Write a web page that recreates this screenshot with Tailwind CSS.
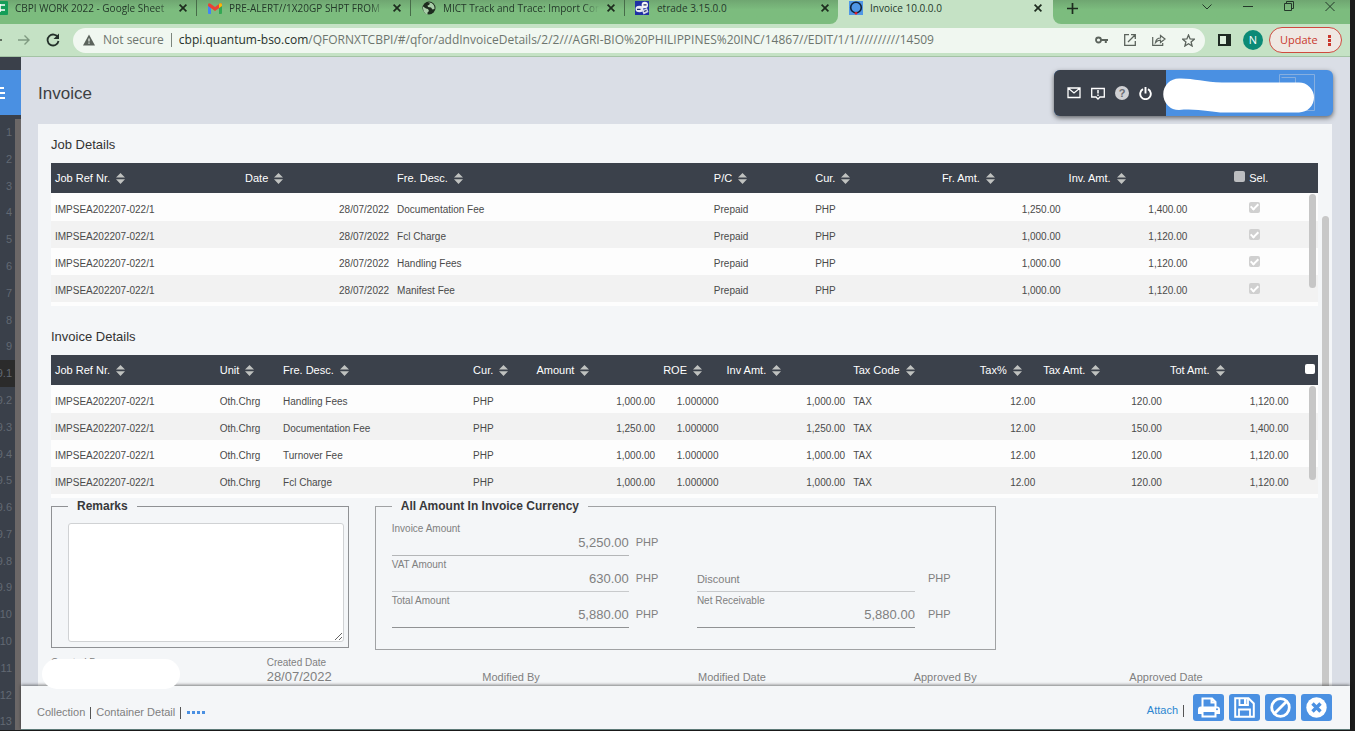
<!DOCTYPE html>
<html lang="en">
<head>
<meta charset="utf-8">
<title>Invoice 10.0.0.0</title>
<script src="https://cdn.jsdelivr.net/npm/@tailwindcss/browser@4"></script>
</head>
<body class="h-screen overflow-hidden bg-[#1c1c1c] pr-[5px] pb-px font-['Liberation_Sans',sans-serif]">
<svg class="hidden" aria-hidden="true">
  <symbol id="sort" viewBox="0 0 9 11"><path d="M0 4.6 4.5 0 9 4.6zM0 6.2 4.5 11 9 6.2z" fill="#c0c2c0"/></symbol>
  <symbol id="close" viewBox="0 0 10 10"><path d="M1.6 1.6l6.8 6.8M8.4 1.6L1.6 8.4" stroke="#1d2b1e" stroke-width="1.7" fill="none"/></symbol>
</svg>
<div class="flex h-full flex-col">

  <!-- Browser chrome -->
  <header class="shrink-0 border-b border-[#a4c3a5] bg-[#c5e2c5] font-['Open_Sans',sans-serif]">
    <div class="flex h-6 text-[10px] leading-4 text-[#24382a]">
      <div class="flex rounded-br-lg bg-linear-to-b from-[#6fa671] to-[#7cbc7e] to-40%">
        <div class="flex h-4 w-[197px] items-center overflow-hidden border-r border-[#476b49]">
          <svg class="h-4 w-2 shrink-0" viewBox="0 0 8 16"><path d="M0 1h7a1 1 0 0 1 1 1v12a1 1 0 0 1-1 1H0z" fill="#159d58"/><path d="M0 5h5M0 10h5M0 4v8" stroke="#fff" stroke-width="1.6"/></svg>
          <span class="ml-[7px] w-[158px] whitespace-nowrap mask-r-from-90%">CBPI WORK 2022 - Google Sheet</span>
          <button aria-label="Close tab" class="ml-[5px] size-[10px]"><svg class="size-full"><use href="#close"/></svg></button>
        </div>
        <div class="flex h-4 w-[214px] items-center overflow-hidden border-r border-[#476b49] pl-[11px]">
          <svg class="h-[11px] w-[14px] shrink-0" viewBox="0 0 14 11"><path d="M0 2v8a1 1 0 0 0 1 1h2V4z" fill="#4285f4"/><path d="M14 2v8a1 1 0 0 1-1 1h-2V4z" fill="#34a853"/><path d="M0 1.500Q.6-.4 2.500.7L7 4l4.500-3.300Q13.400-.4 14 1.500V3L7 8 0 3z" fill="#ea4335"/><path d="M11 1l.6-.4Q13.400-.4 14 1.500V3l-3 2z" fill="#fbbc04"/></svg>
          <span class="ml-[7px] w-[156px] whitespace-nowrap mask-r-from-90%">PRE-ALERT//1X20GP SHPT FROM</span>
          <button aria-label="Close tab" class="ml-[7px] size-[10px]"><svg class="size-full"><use href="#close"/></svg></button>
        </div>
        <div class="flex h-4 w-[214px] items-center overflow-hidden border-r border-[#476b49] pl-[11px]">
          <svg class="size-[14px] shrink-0" viewBox="0 0 14 14"><circle cx="7" cy="7" r="6.500" fill="#1d2b1e"/><path d="M1 5.500l3 2 2 .5 1 2-1.500 1.500 0 1.800C2 12.500.8 9 1 5.500zM6 1.500l2 1-1 1.500-1.500.5L6 6l3 .5 1.500 2 2-.5C13 4 10 .7 6 1.500z" fill="#a9cfa9"/></svg>
          <span class="ml-[7px] w-[156px] whitespace-nowrap mask-r-from-90%">MICT Track and Trace: Import Cor</span>
          <button aria-label="Close tab" class="ml-[7px] size-[10px]"><svg class="size-full"><use href="#close"/></svg></button>
        </div>
        <div class="flex h-4 w-[213px] items-center overflow-hidden pl-[10px]">
          <svg class="size-[14px] shrink-0" viewBox="0 0 14 14"><path d="M0 0h14v14H0z" fill="#1f2fa5"/><ellipse cx="4.500" cy="8" rx="4" ry="3.200" fill="#e7e9f3"/><circle cx="9.800" cy="4" r="3.200" fill="#f5f5f5"/><path d="M7 9.500l5-2.500 1.500 4-5 2.500z" fill="#d5d8ea"/><path d="M2 8.300h3.500M8.500 3.800h3M9 10.500l2.500-1" stroke="#1b2a66" stroke-width="1.300"/></svg>
          <span class="ml-2 w-[156px] whitespace-nowrap">etrade 3.15.0.0</span>
          <button aria-label="Close tab" class="ml-[7px] size-[10px]"><svg class="size-full"><use href="#close"/></svg></button>
        </div>
      </div>
      <div class="flex h-4 w-[215px] items-center pl-[11px]">
        <svg class="size-[14px] shrink-0" viewBox="0 0 14 14"><path d="M0 0h14v14H0z" fill="#4f97e6"/><circle cx="7" cy="6.500" r="5.300" fill="none" stroke="#10243c" stroke-width="1.600"/><path d="M7 10.500l1.800 1.800L7 14l-1.800-1.700z" fill="#e0202a"/></svg>
        <span class="ml-[7px] w-[156px]">Invoice 10.0.0.0</span>
        <button aria-label="Close tab" class="ml-[7px] size-[10px]"><svg class="size-full"><use href="#close"/></svg></button>
      </div>
      <div class="flex grow items-start rounded-bl-lg bg-linear-to-b from-[#6fa671] to-[#7cbc7e] to-40% pr-[15px] pl-[14px]">
        <button aria-label="New tab" class="mt-[3px] mr-auto size-[11px]"><svg viewBox="0 0 11 11"><path d="M5.500 0v11M0 5.500h11" stroke="#1d2b1e" stroke-width="1.700"/></svg></button>
        <div class="flex gap-[31px] pt-px">
          <button aria-label="Search tabs" class="size-[10px]"><svg viewBox="0 0 10 10"><path d="M.5 3.500L5 8l4.500-4.500" fill="none" stroke="#24382a"/></svg></button>
          <button aria-label="Minimise" class="size-[10px]"><svg viewBox="0 0 10 10"><path d="M0 5.500h10" stroke="#24382a"/></svg></button>
          <button aria-label="Restore" class="size-[10px]"><svg viewBox="0 0 10 10"><path d="M.5 2.500h7v7h-7zM2.500 2.500v-2h7v7h-2" fill="none" stroke="#24382a"/></svg></button>
          <button aria-label="Close window" class="size-[10px]"><svg viewBox="0 0 10 10"><path d="M.5 1l9 9M9.500 1l-9 9" stroke="#24382a"/></svg></button>
        </div>
      </div>
    </div>
    <div class="flex h-8 items-center pr-2">
      <button aria-label="Back" class="h-3 w-[2px] overflow-hidden"><svg class="h-3 w-[2px]" viewBox="0 0 2 12"><path d="M0 6h2" stroke="#3c473d" stroke-width="1.500"/></svg></button>
      <button aria-label="Forward" class="ml-4 size-3"><svg viewBox="0 0 12 12"><path d="M0 6h11M6.500 1.500L11 6l-4.500 4.500" fill="none" stroke="#7f9a81" stroke-width="1.400"/></svg></button>
      <button aria-label="Reload" class="ml-4 size-[14px]"><svg viewBox="0 0 14 14"><path d="M12 4.500A5.500 5.500 0 1 0 12.500 8" fill="none" stroke="#23302a" stroke-width="1.800"/><path d="M13 .5V6H7.500z" fill="#23302a"/></svg></button>
      <div class="ml-[13px] flex h-[25px] grow items-center rounded-full bg-[#f0f7f0] px-[10px] text-[12px] text-[#6d756e]">
        <svg class="size-3 shrink-0" viewBox="0 0 12 12"><path d="M6 .5L12 11.500H0z" fill="#5b635c"/><path d="M6 4.500v3M6 8.500v1.300" stroke="#f0f7f0" stroke-width="1.200"/></svg>
        <span class="ml-2">Not secure</span>
        <span class="mx-[7px] h-[14px] w-px bg-[#7c857d]"></span>
        <div class="min-w-0 grow whitespace-nowrap" role="textbox" aria-label="Address" contenteditable="true" spellcheck="false"><span class="text-[#26302a]">cbpi.quantum-bso.com</span>/QFORNXTCBPI/#/qfor/addInvoiceDetails/2/2///AGRI-BIO%20PHILIPPINES%20INC/14867//EDIT/1/1//////////14509</div>
        <div class="flex shrink-0 items-center gap-4 text-[#5b635c]">
          <svg class="h-3 w-[13px]" viewBox="0 0 13 12"><circle cx="3.500" cy="6" r="2.500" fill="none" stroke="currentColor" stroke-width="1.800"/><path d="M6 6h7M10.800 6v3" stroke="currentColor" stroke-width="2"/></svg>
          <svg class="h-3 w-3" viewBox="0 0 12 12"><path d="M5 .7H.7v10.600h10.600V7M7 .7h4.300V5M11 1L4 8" fill="none" stroke="currentColor" stroke-width="1.300"/></svg>
          <svg class="h-3 w-[14px]" viewBox="0 0 14 12"><path d="M.7 3v8.300h10V9M3.500 8.500c.5-3 2-4.500 5-4.500V1.500L13 5 8.500 8.500V6.200c-2 0-3.500.6-5 2.300z" fill="none" stroke="currentColor" stroke-width="1.200"/></svg>
          <svg class="size-[13px]" viewBox="0 0 13 13"><path d="M6.500 1l1.600 3.900 4.200.3-3.200 2.700 1 4.100-3.600-2.200L2.900 12l1-4.100L.7 5.200l4.200-.3z" fill="none" stroke="currentColor" stroke-width="1.300"/></svg>
        </div>
      </div>
      <button aria-label="Side panel" class="ml-[13px] h-3 w-[13px]"><svg viewBox="0 0 13 12"><path d="M1 1h11v10H1z" fill="#dcefdc" stroke="#1e2a22" stroke-width="2"/><path d="M8 0h5v12H8z" fill="#1e2a22"/></svg></button>
      <button aria-label="Profile" class="ml-3 size-5 rounded-full bg-[#0b8a76] text-[11px] leading-5 text-white">N</button>
      <button class="ml-[6px] flex h-[26px] w-[73px] items-center justify-between rounded-full border border-[#cf4a3f] bg-[#efe8e3] px-[10px] text-[11px] text-[#c9372c]">Update
        <svg class="h-[11px] w-[3px]" viewBox="0 0 3 11"><path d="M0 0h3v3H0zM0 4h3v3H0zM0 8h3v3H0z" fill="#c9372c"/></svg></button>
    </div>
  </header>

  <div class="flex min-h-0 grow">
    <!-- Collapsed grid showing behind the page -->
    <aside class="flex w-[21px] shrink-0 flex-col overflow-hidden bg-[#3a404a] pt-[13px]">
      <button aria-label="Menu" class="flex h-[45px] shrink-0 items-center bg-[#4a90e2]"><svg class="h-3 w-[5px]" viewBox="0 0 5 12"><path d="M0 1h4M0 6h5M0 11h5" stroke="#fff" stroke-width="2"/></svg></button>
      <div class="-mb-[5px] flex min-h-0 grow border-t-4 border-[#3a404a]">
        <ol id="lines" class="flex w-[15px] flex-col text-right text-[11px] text-[#626973]"></ol>
        <div class="grow bg-[#6b6767]"></div>
      </div>
    </aside>

    <div class="relative flex min-w-0 grow flex-col bg-[#dadee6]">
      <div class="flex h-[67px] shrink-0 items-start justify-between px-[17px] pt-[13px]">
        <h1 class="pt-3 text-[17px] leading-6 text-[#3d3f43]">Invoice</h1>
        <div class="relative flex h-[46px] w-[279px] rounded-md bg-[#4a90e2] shadow-[0_2px_5px_#0000008c]">
          <div class="flex w-28 items-center gap-[10px] rounded-l-md bg-[#3b414b] pl-[13px] text-white">
            <button aria-label="Mail" class="h-3 w-[14px]"><svg viewBox="0 0 14 12"><path d="M1 1h12v9.500H1zM1 1l6 5 6-5" fill="none" stroke="#fff" stroke-width="1.300"/></svg></button>
            <button aria-label="Notices" class="h-[13px] w-[14px]"><svg viewBox="0 0 14 13"><path d="M.7 1.500h12.600v8.500H9L7 12l-2-2H.7z" fill="none" stroke="#fff" stroke-width="1.300"/><path d="M7 3v3.500M7 7.500V9" stroke="#fff" stroke-width="1.500"/></svg></button>
            <button aria-label="Help" class="size-[14px] rounded-full bg-[#d0d1d4] text-[11px] leading-[14px] font-bold text-[#6a6d73]">?</button>
            <button aria-label="Log out" class="size-[13px]"><svg viewBox="0 0 13 13"><path d="M4 2.200A5.300 5.300 0 1 0 9 2.200M6.500 0v6.500" fill="none" stroke="#fff" stroke-width="1.900"/></svg></button>
          </div>
          <svg class="absolute top-1 right-[18px] h-[39px] w-[154px]" viewBox="0 0 154 39"><path d="M118.500.5h35v36h-35zM120.500 3.500h14v8" fill="none" stroke="#86afe0"/><path d="M18 4.500C31 4 43 8 61 8.500H138a15 15 0 0 1 0 30H63C51 38.500 36 34 18 36A15.500 15.500 0 0 1 18 4.500z" fill="#fff"/></svg>
        </div>
      </div>

      <main class="relative mr-[18px] ml-[17px] flex min-h-0 grow flex-col overflow-hidden bg-[#f4f6f8] pr-[14px] pl-[13px]">
        <h2 class="pt-[11px] text-[13px] leading-5 text-[#333]">Job Details</h2>
        <div class="relative mt-2 border-b-4 border-[#fdfdfd]">
          <table id="jobs" class="w-full table-fixed text-[10px] text-[#4a4a4a]"></table>
          <div class="absolute top-[31px] right-[2px] h-[94px] w-[7px] rounded-full bg-[#c6c6c6]"></div>
        </div>
        <h2 class="pt-[21px] text-[13px] leading-5 text-[#333]">Invoice Details</h2>
        <div class="relative mt-2 border-b-4 border-[#fdfdfd]">
          <table id="items" class="w-full table-fixed text-[10px] text-[#4a4a4a]"></table>
          <div class="absolute top-[31px] right-[2px] h-[94px] w-[7px] rounded-full bg-[#c6c6c6]"></div>
        </div>

        <div class="flex items-start gap-[26px] text-[#808080]">
          <fieldset class="w-[23.5%] border border-[#8f9194] pr-1 pl-4">
            <legend class="px-[9px] text-[12px] leading-4 font-bold text-[#38393b]"><label for="remarks">Remarks</label></legend>
            <textarea id="remarks" class="mt-[9px] mb-[5px] block h-[119px] w-full rounded-[3px] border border-[#d0d2d4] bg-white outline-none"></textarea>
          </fieldset>
          <fieldset class="w-[49%] border border-[#a0a2a4] px-4">
            <legend class="px-[9px] text-[12px] leading-4 font-bold text-[#38393b]">All Amount In Invoice Currency</legend>
            <div class="mt-[6px] mb-[21px] flex">
              <div class="w-[52%]">
                <div class="flex h-9"><div class="flex w-[237px] flex-col border-b border-[#b4b6b8] pt-[3px]"><label for="inv" class="text-[10px] leading-3">Invoice Amount</label><input id="inv" class="h-4 w-full text-right text-[13px] outline-none" value="5,250.00"></div><span class="pt-[14px] pl-[7px] text-[11px] leading-4">PHP</span></div>
                <div class="flex h-9"><div class="flex w-[237px] flex-col border-b border-[#c8cacc] pt-[3px]"><label for="vat" class="text-[10px] leading-3">VAT Amount</label><input id="vat" class="h-4 w-full text-right text-[13px] outline-none" value="630.00"></div><span class="pt-[14px] pl-[7px] text-[11px] leading-4">PHP</span></div>
                <div class="flex h-9"><div class="flex w-[237px] flex-col border-b border-[#909294] pt-[3px]"><label for="tot" class="text-[10px] leading-3">Total Amount</label><input id="tot" class="h-4 w-full text-right text-[13px] outline-none" value="5,880.00"></div><span class="pt-[14px] pl-[7px] text-[11px] leading-4">PHP</span></div>
              </div>
              <div class="grow pt-9">
                <div class="flex h-9"><div class="flex w-[218px] items-center border-b border-[#c8cacc] pt-[10px]"><label for="dis" class="text-[11px] leading-4">Discount</label><input id="dis" class="h-4 min-w-0 grow outline-none"></div><span class="pt-[14px] pl-[13px] text-[11px] leading-4">PHP</span></div>
                <div class="flex h-9"><div class="flex w-[218px] flex-col border-b border-[#909294] pt-[3px]"><label for="net" class="text-[10px] leading-3">Net Receivable</label><input id="net" class="h-4 w-full text-right text-[13px] outline-none" value="5,880.00"></div><span class="pt-[14px] pl-[13px] text-[11px] leading-4">PHP</span></div>
              </div>
            </div>
          </fieldset>
        </div>

        <div class="mt-[7px] -mr-[27px] grid grid-cols-6 items-end text-[11px] leading-4 text-[#808080]">
          <p class="h-7 text-[10px] leading-3">Created By</p>
          <p class="flex flex-col"><span class="text-[10px] leading-3">Created Date</span><span class="text-[13px]">28/07/2022</span></p>
          <p>Modified By</p><p>Modified Date</p><p>Approved By</p><p>Approved Date</p>
        </div>
        <div class="absolute top-[92px] right-[3px] bottom-0 w-[7px] rounded-t-full bg-[#c8c8c8]"></div>
      </main>

      <footer class="relative flex h-[44px] shrink-0 items-center justify-between border-b border-[#5d7a78] bg-[#f4f6f8] pr-[18px] pl-4 text-[11px] text-[#808080] shadow-[0_-1px_3px_#00000080]">
        <nav class="flex items-center gap-[5px] pt-[10px]">
          <a href="#">Collection</a><span class="h-3 w-px bg-[#555]"></span><a href="#">Container Detail</a><span class="h-3 w-px bg-[#555]"></span>
          <a href="#" aria-label="More" class="ml-px"><svg class="h-[3px] w-[18px]" viewBox="0 0 18 3"><path d="M0 0h3v3H0zM5 0h3v3H5zM10 0h3v3h-3zM15 0h3v3h-3z" fill="#4a90e2"/></svg></a>
        </nav>
        <div class="flex items-center gap-[5px]">
          <a href="#" class="pt-[6px] text-[#2b86d0]">Attach</a><span class="mt-[6px] mr-1 h-3 w-px bg-[#555]"></span>
          <button aria-label="Print" class="flex h-[27px] w-[31px] items-center justify-center rounded-[3px] bg-[#4a90e2]"><svg class="h-[21px] w-[22px]" viewBox="0 0 22 21"><path d="M4.500 10V1.500h9.500l3.500 3.500v5M13.500 1.500V5.500h4" fill="none" stroke="#fff" stroke-width="2"/><path d="M3 9.500h16a3 3 0 0 1 3 3V17H0v-4.500a3 3 0 0 1 3-3z" fill="#fff"/><path d="M4.500 14h13v5.500h-13z" fill="#4a90e2" stroke="#fff" stroke-width="2"/><circle cx="19" cy="12.300" r="1" fill="#4a90e2"/></svg></button>
          <button aria-label="Save" class="flex h-[27px] w-[31px] items-center justify-center rounded-[3px] bg-[#4a90e2]"><svg class="size-[21px]" viewBox="0 0 21 21"><path d="M1.200 1.200h13.300l5.300 5.300v13.300H1.200z" fill="none" stroke="#fff" stroke-width="2"/><path d="M5.500 1.500v6.500h8.500V1.500M5 19.500v-7h11v7" fill="none" stroke="#fff" stroke-width="1.800"/><path d="M10 2h2.500v5H10z" fill="#fff"/></svg></button>
          <button aria-label="Cancel" class="flex h-[27px] w-[31px] items-center justify-center rounded-[3px] bg-[#4a90e2]"><svg class="size-[21px]" viewBox="0 0 21 21"><circle cx="10.500" cy="10.500" r="8.800" fill="none" stroke="#fff" stroke-width="2.800"/><path d="M4.500 16.500l12-12" stroke="#fff" stroke-width="2.800"/></svg></button>
          <button aria-label="Close" class="flex h-[27px] w-[31px] items-center justify-center rounded-[3px] bg-[#4a90e2]"><svg class="size-[21px]" viewBox="0 0 21 21"><circle cx="10.500" cy="10.500" r="10.200" fill="#fff"/><path d="M6.500 6.500l8 8M14.500 6.500l-8 8" stroke="#4a90e2" stroke-width="3.400"/></svg></button>
        </div>
      </footer>
      <div class="absolute bottom-[41px] left-[21px] h-[30px] w-[138px] rounded-full bg-white"></div>
    </div>
  </div>
</div>

<script>
const sort = '<svg class="h-[11px] w-[9px] shrink-0" aria-hidden="true"><use href="#sort"/></svg>';

function fill(id, cols, rows, lastHead, lastCell) {
  const widths = cols.map(c => `<col style="width:${c[1]}%">`).join('');
  const heads = cols.map((c, i) => i === cols.length - 1 ? lastHead :
    `<th class="px-1 font-normal"><button class="flex items-center gap-[6px] whitespace-nowrap">${c[0]} ${sort}</button></th>`).join('');
  const body = rows.map(r => '<tr class="h-[27px] odd:bg-[#fdfdfd] even:bg-[#f2f2f2] first:h-7">' +
    r.map((v, i) => `<td class="px-1 pt-1 pb-0 ${cols[i][2] ? 'text-right' : 'text-left'} whitespace-nowrap">${v}</td>`).join('') +
    lastCell + '</tr>').join('');
  document.getElementById(id).innerHTML =
    `<colgroup>${widths}</colgroup><thead class="bg-[#3b414b] text-left text-[11px] text-white"><tr class="h-[30px]">${heads}</tr></thead><tbody>${body}</tbody>`;
}

const ref = 'IMPSEA202207-022/1', day = '28/07/2022';
fill('jobs',
  [['Job Ref Nr.', 15], ['Date', 12, 1], ['Fre. Desc.', 25], ['P/C', 8], ['Cur.', 10], ['Fr. Amt.', 10, 1], ['Inv. Amt.', 10, 1], ['Sel.', 10]],
  [['Documentation Fee', '1,250.00', '1,400.00'], ['Fcl Charge', '1,000.00', '1,120.00'], ['Handling Fees', '1,000.00', '1,120.00'], ['Manifest Fee', '1,000.00', '1,120.00']]
    .map(r => [ref, day, r[0], 'Prepaid', 'PHP', r[1], r[2]]),
  '<th class="pl-[43px] font-normal"><label class="flex items-center gap-1"><input type="checkbox" class="mb-[3px] size-[11px] appearance-none rounded-xs bg-[#bcbdc0]">Sel.</label></th>',
  '<td class="pl-[58px]"><input type="checkbox" checked disabled aria-label="Selected" class="flex size-[11px] appearance-none items-center justify-center rounded-xs bg-[#d0d0d0] after:mb-[2px] after:h-[8px] after:w-[5px] after:rotate-45 after:border-r-2 after:border-b-2 after:border-white"></td>');

fill('items',
  [['Job Ref Nr.', 13], ['Unit', 5], ['Fre. Desc.', 15], ['Cur.', 5], ['Amount', 10, 1], ['ROE', 5, 1], ['Inv Amt.', 10, 1], ['Tax Code', 10], ['Tax%', 5, 1], ['Tax Amt.', 10, 1], ['Tot Amt.', 10, 1], ['', 2]],
  [['Handling Fees', '1,000.00', '120.00', '1,120.00'], ['Documentation Fee', '1,250.00', '150.00', '1,400.00'], ['Turnover Fee', '1,000.00', '120.00', '1,120.00'], ['Fcl Charge', '1,000.00', '120.00', '1,120.00']]
    .map(r => [ref, 'Oth.Chrg', r[0], 'PHP', r[1], '1.000000', r[1], 'TAX', '12.00', r[2], r[3]]),
  '<th class="pr-[3px]"><input type="checkbox" aria-label="Select all" class="mb-[3px] ml-auto block size-[10px] appearance-none rounded-xs bg-white"></th>',
  '<td></td>');

document.getElementById('lines').innerHTML =
  ['1','2','3','4','5','6','7','8','9','9.1','9.2','9.3','9.4','9.5','9.6','9.7','9.8','9.9','10','10','11','12','13']
    .map(n => `<li class="flex min-h-0 flex-1 items-center justify-end pr-[3px] ${n === '9.1' ? 'bg-[#2b2b2b]' : ''}">${n}</li>`).join('');
</script>
</body>
</html>
